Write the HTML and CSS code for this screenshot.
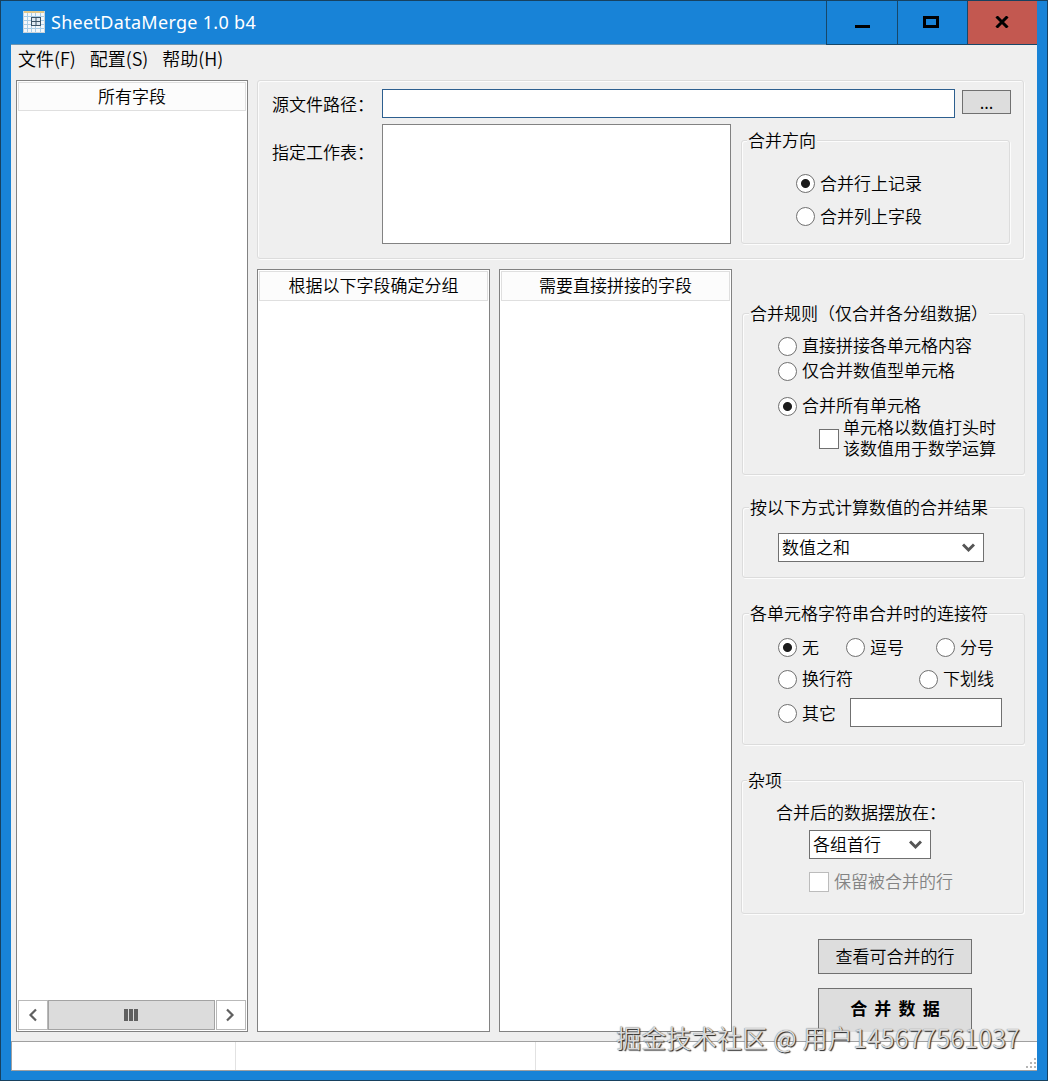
FILE: index.html
```html
<!DOCTYPE html>
<html lang="zh-CN">
<head>
  <meta charset="UTF-8" />
  <meta name="viewport" content="width=device-width, initial-scale=1.0"/>
  <title>SheetDataMerge 1.0 b4</title>
  <link rel="stylesheet" href="styles.css">
</head>
<body>
  <div class="window">
    <header class="titlebar">
      <svg class="app-icon" width="22" height="22" viewBox="0 0 22 22">
        <rect x="0.5" y="0.5" width="21" height="21" fill="#f4f8fb" stroke="#c9d3da"/>
        <path d="M1 1h20" stroke="#e3c98a" stroke-width="2"/>
        <path d="M1 5.5h20M1 9.5h20M1 13.5h20M1 17.5h20M4.500 2v19M8.500 2v19M12.500 2v19M17.500 2v19" stroke="#a9cde6"/>
        <rect x="8.500" y="6.500" width="9" height="8" fill="#dfeaf2" stroke="#3d5568"/>
        <path d="M13 6.500v8M8.500 10.500h9" stroke="#3d5568"/>
      </svg>
      <h1 class="title">SheetDataMerge 1.0 b4</h1>
      <div class="win-buttons">
        <button class="win-btn" aria-label="最小化"><svg width="16" height="14"><path d="M1 11.500h15" stroke="#000" stroke-width="3"/></svg></button>
        <button class="win-btn" aria-label="最大化"><svg width="16" height="12"><rect x="1.500" y="1.500" width="13" height="9" fill="none" stroke="#000" stroke-width="3"/></svg></button>
        <button class="win-btn close" aria-label="关闭"><svg width="14" height="12"><path d="M1.500 0.500l11 11M12.500 0.500l-11 11" stroke="#000" stroke-width="3"/></svg></button>
      </div>
    </header>

    <div class="client">
      <nav class="menubar">
        <a>文件(F)</a>
        <a>配置(S)</a>
        <a>帮助(H)</a>
      </nav>

      <main class="main">
        <section class="list list-all">
          <div class="list-head">所有字段</div>
          <div class="list-body"></div>
          <div class="scrollbar">
            <button class="scroll-btn" aria-label="向左"><svg width="10" height="14"><path d="M8 1.500L2.500 7L8 12.500" fill="none" stroke="#606060" stroke-width="2.200"/></svg></button>
            <div class="thumb"><i></i><i></i><i></i></div>
            <button class="scroll-btn" aria-label="向右"><svg width="10" height="14"><path d="M1 1.500L6.500 7L1 12.500" fill="none" stroke="#606060" stroke-width="2.200"/></svg></button>
          </div>
        </section>

        <div class="right">
          <section class="group source">
            <div class="source-row">
              <label class="source-label" for="path">源文件路径：</label>
              <input type="text" id="path" class="path-input">
              <button class="btn browse">...</button>
            </div>
            <div class="source-row">
              <span class="source-label sheet-label">指定工作表：</span>
              <div class="sheet-list"></div>
              <div class="group direction">
                <div class="legend">合并方向</div>
                <label class="option"><input type="radio" name="dir" checked>合并行上记录</label>
                <label class="option"><input type="radio" name="dir">合并列上字段</label>
              </div>
            </div>
          </section>

          <div class="lower">
            <section class="list">
              <div class="list-head">根据以下字段确定分组</div>
            </section>
            <section class="list">
              <div class="list-head">需要直接拼接的字段</div>
            </section>

            <aside class="side">
              <div class="group rules">
                <div class="legend">合并规则（仅合并各分组数据）</div>
                <label class="option"><input type="radio" name="rule">直接拼接各单元格内容</label>
                <label class="option"><input type="radio" name="rule">仅合并数值型单元格</label>
                <label class="option option-all"><input type="radio" name="rule" checked>合并所有单元格</label>
                <div class="option two-lines">
                  <input type="checkbox" id="leadingNumber">
                  <label for="leadingNumber"><span>单元格以数值打头时</span><span>该数值用于数学运算</span></label>
                </div>
              </div>

              <div class="group calc">
                <div class="legend">按以下方式计算数值的合并结果</div>
                <div class="combo">
                  <span>数值之和</span>
                  <svg width="13" height="10"><path d="M1 1.500L6.500 7L12 1.500" fill="none" stroke="#555" stroke-width="3"/></svg>
                </div>
              </div>

              <div class="group joiner">
                <div class="legend">各单元格字符串合并时的连接符</div>
                <div class="option-row">
                  <label class="option"><input type="radio" name="join" checked>无</label>
                  <label class="option comma"><input type="radio" name="join">逗号</label>
                  <label class="option semicolon"><input type="radio" name="join">分号</label>
                </div>
                <div class="option-row option-row-mid">
                  <label class="option"><input type="radio" name="join">换行符</label>
                  <label class="option underline"><input type="radio" name="join">下划线</label>
                </div>
                <div class="option-row">
                  <label class="option"><input type="radio" name="join">其它</label>
                  <input type="text" class="other-input" aria-label="其它">
                </div>
              </div>

              <div class="group misc">
                <div class="legend">杂项</div>
                <div class="misc-label">合并后的数据摆放在：</div>
                <div class="combo">
                  <span>各组首行</span>
                  <svg width="13" height="10"><path d="M1 1.500L6.500 7L12 1.500" fill="none" stroke="#555" stroke-width="3"/></svg>
                </div>
                <label class="option disabled"><input type="checkbox" disabled>保留被合并的行</label>
              </div>

              <button class="btn view-btn">查看可合并的行</button>
              <button class="btn merge-btn">合 并 数 据</button>
            </aside>
          </div>
        </div>
      </main>

      <footer class="statusbar">
        <div class="pane pane-1"></div>
        <div class="pane pane-2"></div>
        <div class="pane pane-3">
          <svg width="12" height="12" fill="#b5b5b5"><path d="M9 0h2v2h-2zM5 4h2v2h-2zM9 4h2v2h-2zM1 8h2v2h-2zM5 8h2v2h-2zM9 8h2v2h-2z"/></svg>
        </div>
      </footer>
    </div>

    <div class="watermark">掘金技术社区 @ 用户145677561037</div>
  </div>
</body>
</html>
```
FILE: styles.css
```css
* {
  box-sizing: border-box;
  margin: 0;
  padding: 0;
}

body {
  font-family: "Noto Sans CJK SC", sans-serif;
  font-size: 17px;
  font-weight: 350;
  line-height: 20px;
  color: #000;
  white-space: nowrap;
  overflow: hidden;
}

button,
input {
  font: inherit;
  color: inherit;
}

.window {
  position: relative;
  display: flex;
  flex-direction: column;
  width: 1048px;
  height: 1081px;
  padding: 0 10px 10px;
  background: #1883d7;
  border: 1px solid #17415f;
}

/* --- TITLE BAR --- */
.titlebar {
  display: flex;
  flex: none;
  height: 44px;
  border-bottom: 1px solid #6d94b0;
}

.app-icon {
  margin: 10px 0 0 12px;
}

.title {
  margin: 7px 0 0 6px;
  font-family: "Noto Sans", "Noto Sans CJK SC", sans-serif;
  font-size: 18px;
  font-weight: 400;
  line-height: 28px;
  letter-spacing: 0.3px;
  color: #fff;
}

.win-buttons {
  display: flex;
  margin-left: auto;
}

.win-btn {
  display: flex;
  align-items: center;
  justify-content: center;
  width: 70px;
  height: 44px;
  padding: 0 3px 2px 0;
  background: #1883d7;
  border: solid #174768;
  border-width: 0 0 1px 1px;
}

.win-btn:first-child {
  width: 71px;
  padding-right: 0;
}

.win-btn.close {
  padding-right: 1px;
  background: #c35850;
}

.client {
  display: flex;
  flex: 1;
  flex-direction: column;
  min-height: 0;
  background: #efefef;
}

/* --- MENU --- */
.menubar {
  display: flex;
  flex: none;
  gap: 14px;
  height: 35px;
  padding: 2px 0 0 7px;
  font-size: 18px;
  line-height: 22px;
}

.main {
  display: flex;
  flex: none;
  gap: 9px;
  height: 952px;
  padding-left: 5px;
}

/* --- LISTS --- */
.list {
  display: flex;
  flex: none;
  flex-direction: column;
  width: 233px;
  padding: 1px;
  background: #fff;
  border: 1px solid #828282;
}

.list-all {
  width: 232px;
}

.list-head {
  height: 30px;
  background: #fcfcfc;
  border: 1px solid #dfdfdf;
  line-height: 26px;
  text-align: center;
}

.list-all .list-head {
  height: 29px;
}

.list-body {
  flex: 1;
}

.scrollbar {
  display: flex;
  height: 30px;
}

.scroll-btn {
  display: flex;
  align-items: center;
  justify-content: center;
  width: 30px;
  background: #fff;
  border: 1px solid #b9b9b9;
}

.thumb {
  display: flex;
  flex: 1;
  align-items: center;
  justify-content: center;
  gap: 1px;
  margin-right: 1px;
  padding-right: 1px;
  background: #dcdcdc;
  border: 1px solid #a3a3a3;
}

.thumb i {
  width: 4px;
  height: 12px;
  background: #606060;
}

/* --- GROUP BOXES --- */
.group {
  border: 1px solid #dcdcdc;
  border-radius: 3px;
  box-shadow: 1px 1px 0 #fcfcfc, inset 1px 1px 0 #fcfcfc;
}

.legend {
  width: max-content;
  height: 20px;
  margin: -11px 0 0 5px;
  padding: 0 1px;
  background: #efefef;
}

.option {
  display: flex;
  align-items: center;
  gap: 5px;
  height: 25px;
}

input[type="radio"],
input[type="checkbox"] {
  appearance: none;
  flex: none;
  width: 20px;
  height: 20px;
  margin-top: 2px;
  background: #fff;
  border: 1px solid #707070;
}

input[type="radio"] {
  width: 19px;
  height: 19px;
  border-radius: 50%;
}

input[type="radio"]:checked {
  background: radial-gradient(circle, #1c1c1c 4px, #fff 5px);
}

input[type="text"] {
  height: 29px;
  background: #fff;
  border: 1px solid #707070;
  outline: none;
}

.btn {
  background: #dddddd;
  border: 1px solid #707070;
}

.combo {
  display: flex;
  align-items: center;
  justify-content: space-between;
  width: 206px;
  height: 29px;
  padding: 0 8px 0 3px;
  background: #fff;
  border: 1px solid #707070;
}

.combo span {
  padding-bottom: 2px;
}

/* --- SOURCE FILE --- */
.right {
  display: flex;
  flex: none;
  flex-direction: column;
  gap: 10px;
  width: 768px;
}

.source {
  flex: none;
  width: 767px;
  height: 179px;
  padding: 8px 0 0 14px;
}

.source-row {
  display: flex;
}

.source-label {
  flex: none;
  width: 110px;
  padding-top: 5px;
}

.source-row .path-input {
  width: 573px;
  border-color: #2d5f8f;
}

.browse {
  width: 49px;
  height: 24px;
  margin: 1px 0 0 7px;
  line-height: 22px;
}

.sheet-label {
  padding-top: 24px;
}

.sheet-list {
  width: 349px;
  height: 120px;
  margin-top: 6px;
  background: #fff;
  border: 1px solid #828282;
}

.direction {
  width: 269px;
  height: 104px;
  margin: 22px 0 0 10px;
}

.direction .option {
  height: 33px;
  margin-left: 54px;
}

.direction .legend + .option {
  margin-top: 16px;
}

/* --- LOWER AREA --- */
.lower {
  display: flex;
  flex: 1;
  gap: 9px;
  min-height: 0;
}

.side {
  display: flex;
  flex-direction: column;
  width: 284px;
  padding: 44px 0 0 1px;
  overflow: hidden;
}

.side .group {
  flex: none;
  width: 283px;
}

.side .legend {
  margin-left: 6px;
}

.rules {
  height: 162px;
}

.rules .option {
  margin-left: 35px;
}

.rules input[type="radio"] {
  margin-top: 4px;
}

.rules .legend + .option {
  margin-top: 9px;
}

.rules .option-all {
  margin-top: 10px;
}

.rules .two-lines {
  gap: 4px;
  height: 42px;
  margin: 0 0 0 76px;
  line-height: 21px;
}

.two-lines label {
  display: flex;
  flex-direction: column;
  padding-bottom: 2px;
}

.calc {
  height: 71px;
  margin-top: 32px;
}

.calc .combo {
  margin: 16px 0 0 35px;
}

.joiner {
  height: 132px;
  margin-top: 35px;
}

.option-row {
  display: flex;
  align-items: center;
  height: 33px;
  margin-left: 35px;
}

.option-row-mid {
  padding-bottom: 3px;
}

.joiner .legend + .option-row {
  margin-top: 7px;
}

.comma {
  margin-left: 27px;
}

.semicolon {
  margin-left: 32px;
}

.underline {
  margin-left: 66px;
}

.other-input {
  width: 152px;
  margin-left: 14px;
}

.side .misc {
  height: 134px;
  margin: 35px 0 0 -1px;
}

.side .misc .legend {
  margin-left: 5px;
}

.misc-label {
  margin: 12px 0 0 34px;
}

.misc .combo {
  width: 122px;
  margin: 8px 0 0 67px;
}

.disabled {
  margin: 9px 0 0 67px;
  color: #838383;
}

.disabled input[type="checkbox"] {
  border-color: #bcbcbc;
}

.view-btn {
  flex: none;
  width: 154px;
  height: 35px;
  margin: 25px 0 0 76px;
  padding-bottom: 2px;
}

/* the button runs past the bottom edge of the column */
.merge-btn {
  flex: none;
  width: 154px;
  height: 46px;
  margin: 14px 0 0 76px;
  padding-bottom: 2px;
  font-family: "Liberation Serif", "Noto Sans CJK SC", serif;
  font-weight: 700;
  word-spacing: 3px;
}

/* --- STATUS BAR --- */
.statusbar {
  display: flex;
  flex: none;
  height: 30px;
  margin-top: 9px;
  background: #fff;
  border: 1px solid #a0a0a0;
  border-width: 1px 0 1px 1px;
}

.pane {
  border-right: 1px solid #e2e2e2;
}

.pane-1 {
  width: 224px;
}

.pane-2 {
  width: 300px;
}

.pane-3 {
  display: flex;
  flex: 1;
  align-items: flex-end;
  justify-content: flex-end;
  border-right: none;
}

.watermark {
  position: absolute;
  right: 27px;
  bottom: 25px;
  font-size: 25px;
  line-height: 36px;
  letter-spacing: 0.2px;
  color: rgba(228, 228, 228, 0.95);
  text-shadow: 1px 1px 1px #222, 0 0 1px #555;
}
```
